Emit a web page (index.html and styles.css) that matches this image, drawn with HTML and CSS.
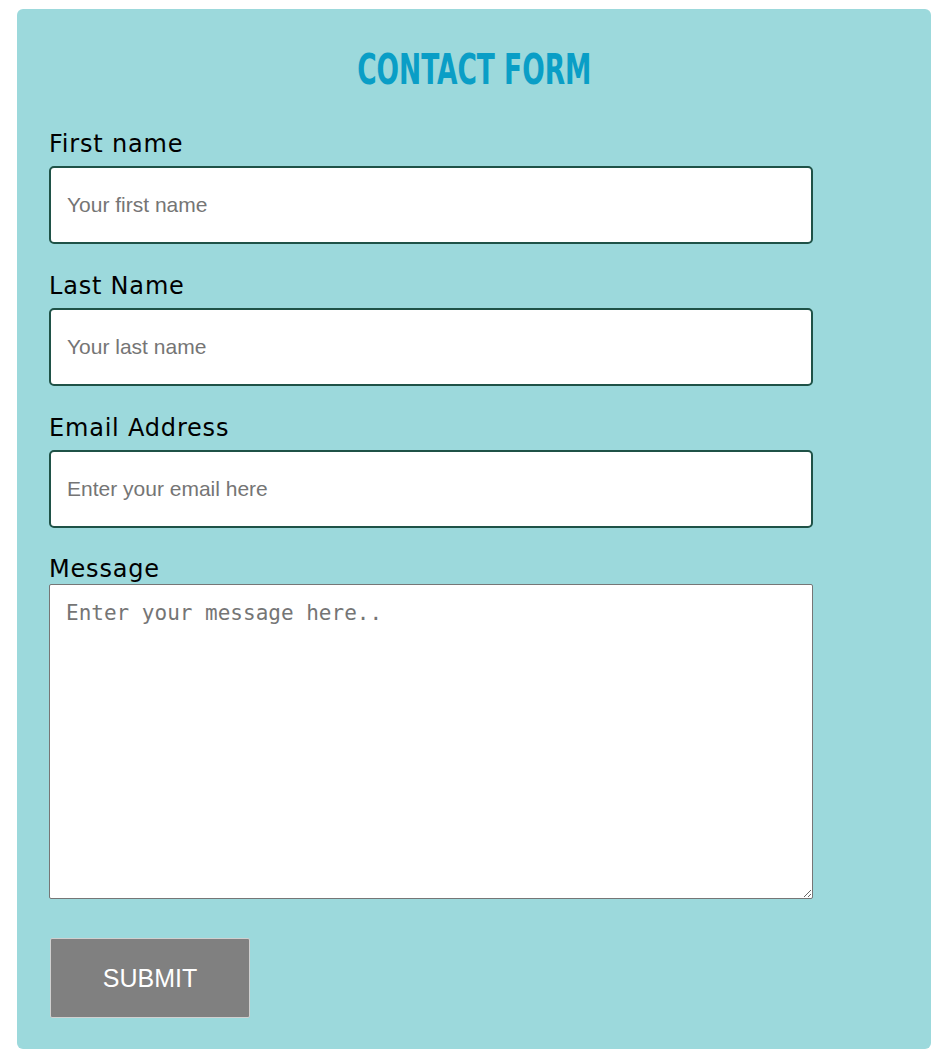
FILE: index.html
```html
<!DOCTYPE html>
<html lang="en">
<head>
<meta charset="utf-8">
<title>Contact Form</title>
<link rel="stylesheet" href="styles.css">
</head>
<body>
<div class="card">
  <h1 class="title"><span class="title-text">CONTACT FORM</span></h1>
  <form class="form">
    <label class="label" for="fn">First name</label>
    <input class="input" id="fn" type="text" placeholder="Your first name">
    <label class="label" for="ln">Last Name</label>
    <input class="input" id="ln" type="text" placeholder="Your last name">
    <label class="label" for="em">Email Address</label>
    <input class="input" id="em" type="email" placeholder="Enter your email here">
    <label class="label label-msg" for="msg">Message</label>
    <textarea class="textarea" id="msg" placeholder="Enter your message here.."></textarea>
    <button class="submit" type="button">SUBMIT</button>
  </form>
</div>
</body>
</html>
```

FILE: styles.css
```css
* { box-sizing: border-box; }
html, body { background: #ffffff; }
body {
  margin: 0;
  padding: 9px 21px 0 17px;
}
.card {
  background: #9cd9dc;
  border-radius: 6px;
  padding: 36px 32px 32px 32px;
  height: 1040px;
}
.title {
  margin: 0 0 34px 0;
  text-align: center;
  font-family: "DejaVu Sans Condensed", "DejaVu Sans", sans-serif;
  font-weight: 700;
  font-size: 42px;
  line-height: 50px;
  color: #0a9ec6;
}
.title-text {
  display: inline-block;
  transform: scaleX(0.7);
  transform-origin: center;
  white-space: nowrap;
}
.form {
  display: flex;
  flex-direction: column;
  align-items: flex-start;
}
.label {
  font-family: "DejaVu Sans", sans-serif;
  font-size: 24px;
  line-height: 30px;
  letter-spacing: 0.8px;
  color: #000;
  margin-bottom: 7px;
}
.label-msg { margin-bottom: 0; line-height: 29px; }
.input {
  width: 764px;
  height: 78px;
  border: 2px solid #1f5247;
  border-radius: 5px;
  background: #fff;
  padding: 0 16px;
  font-family: "Liberation Sans", Arial, sans-serif;
  font-size: 21px;
  color: #333;
  margin: 0 0 27px 0;
  outline: none;
}
.input::placeholder { color: #757575; }
.textarea {
  width: 764px;
  height: 315px;
  border: 1px solid #767676;
  border-radius: 2px;
  background: #fff;
  padding: 16px 16px;
  font-family: "DejaVu Sans Mono", monospace;
  font-size: 21px;
  margin: 0 0 39px 0;
  resize: vertical;
}
.textarea::placeholder { color: #757575; }
.submit {
  width: 200px;
  height: 80px;
  background: #808080;
  border: 1px solid #d0d0d0;
  border-radius: 2px;
  color: #fff;
  font-family: "Liberation Sans", Arial, sans-serif;
  font-size: 25px;
  margin-left: 1px;
}
```
